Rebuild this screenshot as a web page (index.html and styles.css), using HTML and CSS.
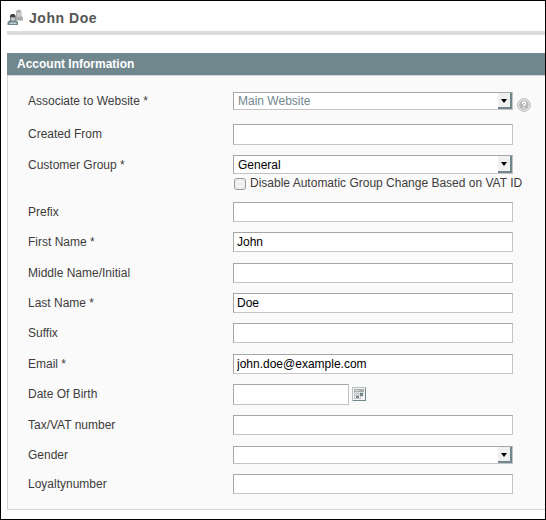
FILE: index.html
```html
<!DOCTYPE html>
<html lang="en">
<head>
<meta charset="utf-8">
<title>John Doe</title>
<link rel="stylesheet" href="styles.css">
</head>
<body>
<main class="page">
  <header class="title">
    <svg class="people" width="16" height="17" viewBox="0 0 16 17">
      <path d="M6.500 11.500V10L9 8V2.500Q10 .5 12 .5T14.500 3V7L16 9v2.500z" fill="#aaa"/>
      <path d="M9.500 3.500h4.500v3l-1.500 1.500h-2z" fill="#ccc"/>
      <path d="M.5 16v-3L3 11V7.500Q3 5 5.500 5T8.500 7.500V11L11 13v3z" fill="#71878e"/>
      <path d="M3 8.500V7Q3.500 5 6 5t2.500 2.500v1H7L6 7.500z" fill="#393c3f"/>
      <path d="M4 8.500h4v2L6.500 12h-1L4 10.500z" fill="#c9c4c0"/>
      <path d="M2.500 14l2-1 1.500 1 1.500-1 2 1v1h-7z" fill="#c2d0d5"/>
    </svg>
    <h1>John Doe</h1>
  </header>
  <section class="panel">
    <h2>Account Information</h2>
    <form class="fields">
      <div class="row website"><label>Associate to Website *</label><div class="select muted"><span>Main Website</span><i class="arrow"></i></div>
        <svg class="help" width="14" height="14" viewBox="0 0 14 14"><circle cx="7" cy="7" r="6.300" fill="#eee" stroke="#b5b5b5"/><circle cx="7" cy="7" r="4.800" fill="#b8b8b8"/><path d="M5.300 5.700Q5.300 4 7 4t1.700 1.500Q8.700 6.500 7 7.200V8.300M7 9.200v1.300" fill="none" stroke="#fff" stroke-width="1.400"/></svg>
      </div>
      <div class="row created"><label>Created From</label><input type="text"></div>
      <div class="row group"><label>Customer Group *</label>
        <div><div class="select"><span>General</span><i class="arrow"></i></div>
          <div class="option"><i class="check"></i><span>Disable Automatic Group Change Based on VAT ID</span></div></div>
      </div>
      <div class="row"><label>Prefix</label><input type="text"></div>
      <div class="row tall"><label>First Name *</label><input type="text" value="John"></div>
      <div class="row"><label>Middle Name/Initial</label><input type="text"></div>
      <div class="row"><label>Last Name *</label><input type="text" value="Doe"></div>
      <div class="row tall"><label>Suffix</label><input type="text"></div>
      <div class="row"><label>Email *</label><input type="text" value="john.doe@example.com"></div>
      <div class="row birth"><label>Date Of Birth</label><input type="text">
        <svg class="calendar" width="14" height="14" viewBox="0 0 14 14" shape-rendering="crispEdges"><path d="M0 0h14v14H0z" fill="#b5bec1"/><path d="M1 1h12v12H1z" fill="#f5f5f5"/><path d="M13 1h1v13H1v-1h12z" fill="#71878e"/><path d="M2 2h10v3H2z" fill="#aaa"/><path d="M3 3h4v1H3z" fill="#ddd"/><path d="M2 5h1v7H2zM4 5h1v7H4zM6 5h1v7H6zM8 5h1v7H8zM10 5h1v5h-1zM2 6h10v1H2zM2 8h9v1H2zM2 11h7v1H2z" fill="#c4c4c4"/><path d="M8 6h3v3H8zM4 9h3v2H4z" fill="#71878e"/></svg>
      </div>
      <div class="row tall"><label>Tax/VAT number</label><input type="text"></div>
      <div class="row gender"><label>Gender</label><div class="select"><span></span><i class="arrow"></i></div></div>
      <div class="row last"><label>Loyaltynumber</label><input type="text"></div>
    </form>
  </section>
</main>
</body>
</html>
```
FILE: styles.css
```css
* { box-sizing: border-box; }
body { margin: 0; font: 12px "Liberation Sans", Arial, sans-serif; color: #403c3c; }
.page { height: 520px; border: 1px solid #000; padding: 8px 0 0 6px; background: #fff; }
.title { display: flex; height: 26px; border-bottom: 4px solid #dcdcdc; }
.people { flex: none; margin-right: 6px; }
h1 { margin: 0; font-size: 14px; line-height: 18px; letter-spacing: .55px; color: #555; }
.panel { margin-top: 18px; }
h2 { margin: 0; height: 22px; padding-left: 10px; background: #71878e; color: #fff; font-size: 12px; line-height: 22px; }
.fields { height: 435px; padding: 16px 0 0 20px; border: 1px solid #d5d5d5; border-right: 0; background: #fafafa; }
.row { display: grid; grid-template-columns: 205px 280px auto; justify-content: start; align-items: start; height: 30px; }
.tall { height: 31px; }
.website { height: 32px; }
.created { height: 31px; }
.group { height: 47px; }
.birth { grid-template-columns: 205px 116px auto; height: 31px; }
.gender { height: 28px; }
label { line-height: 21px; white-space: nowrap; }
.website label, .gender label { line-height: 19px; }
input, .select { width: 100%; border: 1px solid #c4c4c4; border-top-color: #a6a6a6; border-left-color: #a6a6a6; background: #fff; color: #000; }
input { height: 20px; margin: 0; padding: 0 3px; font: inherit; border-radius: 0; outline: 0; }
.created input, .birth input { height: 21px; }
.select { display: flex; justify-content: space-between; height: 18px; padding-left: 4px; line-height: 17px; }
.muted { color: #71878e; }
.group .select { height: 19px; line-height: 18px; }
.arrow { position: relative; width: 14px; background: #f0f0f0; border-right: 2px solid #71878e; border-bottom: 2px solid #71878e; }
.arrow::after { content: ""; position: absolute; left: 3px; top: 6px; border: 3px solid transparent; border-top: 4px solid #000; border-bottom: 0; }
.option { display: flex; white-space: nowrap; line-height: 19px; }
.check { flex: none; width: 12px; height: 12px; margin: 4px 4px 0 1px; border: 1px solid #999; border-radius: 3px; background: #f2f2f2; }
.help { margin: 6px 0 0 4px; }
.calendar { margin: 3px 0 0 3px; }
```
